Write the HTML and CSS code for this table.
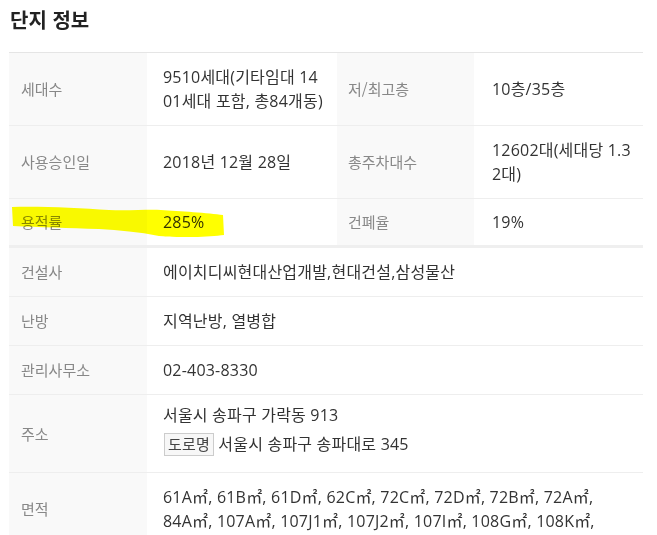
FILE: index.html
```html
<!DOCTYPE html>
<html lang="ko">
<head>
  <meta charset="UTF-8" />
  <meta name="viewport" content="width=device-width, initial-scale=1" />
  <title>단지 정보</title>
  <link rel="stylesheet" href="styles.css">
</head>
<body>

<section class="complex-info">
  <h2>단지 정보</h2>

  <div class="table-wrap">
    <table class="info-table">
      <colgroup>
        <col class="col-label">
        <col class="col-value">
        <col class="col-label2">
        <col class="col-value2">
      </colgroup>
      <tbody>
        <tr>
          <th>세대수</th>
          <td class="narrow">9510세대(기타임대 1401세대 포함, 총84개동)</td>
          <th class="th2">저/최고층</th>
          <td class="narrow v2">10층/35층</td>
        </tr>
        <tr>
          <th>사용승인일</th>
          <td class="narrow">2018년 12월 28일</td>
          <th class="th2">총주차대수</th>
          <td class="narrow v2">12602대(세대당 1.32대)</td>
        </tr>
        <tr class="last-top">
          <th>용적률</th>
          <td class="narrow">285%</td>
          <th class="th2">건폐율</th>
          <td class="narrow v2">19%</td>
        </tr>
        <tr>
          <th>건설사</th>
          <td colspan="3">에이치디씨현대산업개발,현대건설,삼성물산</td>
        </tr>
        <tr>
          <th>난방</th>
          <td colspan="3">지역난방, 열병합</td>
        </tr>
        <tr>
          <th>관리사무소</th>
          <td colspan="3">02-403-8330</td>
        </tr>
        <tr class="addr-row">
          <th>주소</th>
          <td colspan="3">
            <div>서울시 송파구 가락동 913</div>
            <div class="road"><span class="badge">도로명</span> 서울시 송파구 송파대로 345</div>
          </td>
        </tr>
        <tr>
          <th>면적</th>
          <td colspan="3" class="area">61A㎡, 61B㎡, 61D㎡, 62C㎡, 72C㎡, 72D㎡, 72B㎡, 72A㎡, 84A㎡, 107A㎡, 107J1㎡, 107J2㎡, 107I㎡, 108G㎡, 108K㎡,</td>
        </tr>
      </tbody>
    </table>

    <!-- 형광펜 표시 -->
    <svg class="marker" width="230" height="40" viewBox="0 0 230 40">
      <path d="M3 10 C30 9 70 11 100 13 C120 14 140 12 152 13 C170 14 200 16 214 18 L215 38 C200 40 170 41 150 39 C130 35 110 33 90 32 C60 31 30 30 4 29 Z" fill="#ffff00"/>
    </svg>
  </div>
</section>

</body>
</html>
```

FILE: styles.css
```css
body {
  margin: 0;
  font-family: "Noto Sans CJK KR", "Noto Sans", sans-serif;
  color: #333;
  background: #fff;
}
.complex-info {
  padding: 0 14px 0 9px;
}
.complex-info h2 {
  margin: 6px 0 18px 1px;
  font-size: 20px;
  line-height: 28px;
  font-weight: bold;
  color: #222;
}
.table-wrap {
  position: relative;
}
.info-table {
  width: 634px;
  border-collapse: collapse;
  table-layout: fixed;
  border-top: 1px solid #e5e5e5;
  line-height: 24px;
}
.col-label { width: 138px; }
.col-value { width: 190px; }
.col-label2 { width: 137px; }
.col-value2 { width: 169px; }
.info-table th,
.info-table td {
  padding: 12px 12px 12px 16px;
  border-bottom: 1px solid #eeeeee;
  text-align: left;
  vertical-align: middle;
}
.info-table th {
  background-color: #f9f9f9;
  color: #888;
  font-size: 15px;
  font-weight: normal;
  padding-left: 12px;
}
.info-table th.th2 {
  padding-left: 11px;
}
.info-table td {
  font-family: "Open Sans", "Noto Sans CJK KR", sans-serif;
  font-size: 16px;
  letter-spacing: 0.2px;
  color: #333;
}
.info-table td.narrow {
  word-break: break-all;
  padding-right: 12px;
}
.info-table td.v2 {
  padding-left: 18px;
  padding-right: 8px;
}
.info-table td.area {
  padding-right: 30px;
}
.info-table tr.last-top th,
.info-table tr.last-top td {
  padding-top: 11px;
  padding-bottom: 11px;
  border-bottom: 3px solid #efefef;
}
.addr-row td {
  padding-top: 8px;
  padding-bottom: 16px;
}
.road {
  margin-top: 5px;
}
.badge {
  display: inline-block;
  padding: 0 3px;
  border: 1px solid #ccc;
  background: #f7f7f7;
  font-size: 15px;
  line-height: 21px;
  color: #444;
  margin-left: 1px;
}
.marker {
  position: absolute;
  left: 0;
  top: 145px;
  mix-blend-mode: multiply;
  pointer-events: none;
}
```
